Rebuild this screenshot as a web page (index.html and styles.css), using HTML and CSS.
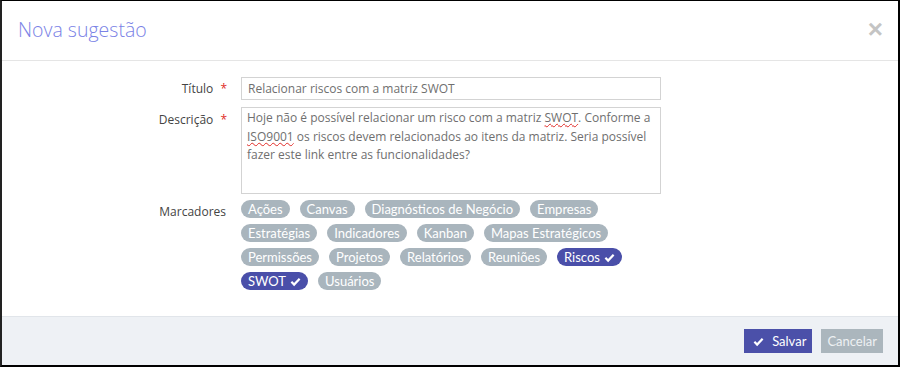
FILE: index.html
```html
<!DOCTYPE html>
<html lang="pt-BR">
<head>
    <meta charset="UTF-8">
    <title>Nova sugestão</title>
    <link rel="stylesheet" href="styles.css">
</head>
<body>
    <div class="modal">
        <div class="modal-header">
            <h2 class="modal-title">Nova sugestão</h2>
            <span class="close">&times;</span>
        </div>

        <div class="modal-body">
            <div class="form-row">
                <label class="form-label">Título <span class="req">*</span></label>
                <div class="form-input">Relacionar riscos com a matriz SWOT</div>
            </div>

            <div class="form-row">
                <label class="form-label label-top">Descrição <span class="req">*</span></label>
                <div class="form-textarea">Hoje não é possível relacionar um risco com a matriz <span class="typo">SWOT</span>. Conforme a <span class="typo">ISO9001</span> os riscos devem relacionados ao itens da matriz. Seria possível fazer este link entre as funcionalidades?</div>
            </div>

            <div class="form-row">
                <label class="form-label label-tags">Marcadores</label>
                <div class="tags">
                    <span class="tag">Ações</span>
                    <span class="tag">Canvas</span>
                    <span class="tag">Diagnósticos de Negócio</span>
                    <span class="tag">Empresas</span>
                    <span class="tag">Estratégias</span>
                    <span class="tag">Indicadores</span>
                    <span class="tag">Kanban</span>
                    <span class="tag">Mapas Estratégicos</span>
                    <span class="tag">Permissões</span>
                    <span class="tag">Projetos</span>
                    <span class="tag">Relatórios</span>
                    <span class="tag">Reuniões</span>
                    <span class="tag selected">Riscos
                        <svg class="check" viewBox="0 0 16 16"><path d="M2 8.5 L6 12.5 L14 4"/></svg>
                    </span>
                    <span class="tag selected">SWOT
                        <svg class="check" viewBox="0 0 16 16"><path d="M2 8.5 L6 12.5 L14 4"/></svg>
                    </span>
                    <span class="tag">Usuários</span>
                </div>
            </div>
        </div>

        <div class="modal-footer">
            <button class="btn btn-primary">
                <svg class="check" viewBox="0 0 16 16"><path d="M2 8.5 L6 12.5 L14 4"/></svg>
                Salvar
            </button>
            <button class="btn btn-default">Cancelar</button>
        </div>
    </div>
</body>
</html>
```

FILE: styles.css
```css
body {
    margin: 0;
    font-family: 'Open Sans', sans-serif;
    color: #333;
    background-color: #fff;
}

.modal {
    width: 900px;
    height: 367px;
    box-sizing: border-box;
    border-top: 1px solid #000;
    border-left: 2px solid #222;
    border-right: 2px solid #000;
    border-bottom: 2px solid #000;
    display: flex;
    flex-direction: column;
    background-color: #fff;
}

.modal-header {
    height: 60px;
    box-sizing: border-box;
    padding: 0 15px 3px 16px;
    border-bottom: 1px solid #e5e5e5;
    display: flex;
    align-items: center;
    justify-content: space-between;
}

.modal-title {
    margin: 0;
    font-weight: 300;
    font-size: 19.5px;
    color: #7a82e6;
    font-family: 'Open Sans', sans-serif;
}

.close {
    font-size: 26px;
    font-weight: bold;
    color: #c4c4c4;
    font-family: 'Liberation Sans', sans-serif;
    line-height: 1;
}

.modal-body {
    flex: 1;
    padding-top: 16px;
}

.form-row {
    display: grid;
    grid-template-columns: 227px 420px;
    column-gap: 12px;
    margin-bottom: 7px;
}

.form-label {
    text-align: right;
    font-size: 12px;
    color: #444;
    line-height: 23px;
    padding-right: 2px;
}

.label-top {
    line-height: 26px;
}

.label-tags {
    padding-right: 3px;
    line-height: 22px;
}

.req {
    color: #e02b27;
    margin-left: 4px;
}

.form-input {
    height: 23px;
    box-sizing: border-box;
    border: 1px solid #d3d3d3;
    padding: 0 6px;
    font-size: 12px;
    line-height: 21px;
    color: #6f6f6f;
}

.form-textarea {
    height: 87px;
    box-sizing: border-box;
    border: 1px solid #d3d3d3;
    padding: 1px 5px;
    font-size: 12px;
    line-height: 18.5px;
    color: #6f6f6f;
}

.typo {
    text-decoration: underline wavy #e02b27;
    text-decoration-thickness: 1px;
    text-underline-offset: 1px;
}

.tags {
    display: flex;
    flex-wrap: wrap;
    gap: 6px 10px;
    margin-top: -1px;
}

.tag {
    display: inline-flex;
    align-items: center;
    gap: 4px;
    height: 18px;
    padding: 0 7px;
    border-radius: 9px;
    background-color: #a9b5bd;
    color: #fff;
    font-family: 'Lato', sans-serif;
    font-size: 13px;
}

.tag.selected {
    background-color: #4a4fa9;
}

.check {
    width: 11px;
    height: 11px;
    fill: none;
    stroke: #fff;
    stroke-width: 3.2;
}

.modal-footer {
    height: 48px;
    border-top: 1px solid #e1e5ea;
    background-color: #eef1f5;
    display: flex;
    align-items: center;
    justify-content: flex-end;
    gap: 9px;
    padding-right: 15px;
}

.btn {
    height: 24px;
    border: none;
    font-family: 'Lato', sans-serif;
    font-size: 13px;
    display: inline-flex;
    align-items: center;
    cursor: pointer;
}

.btn-primary {
    background-color: #4b50a9;
    color: #fff;
    padding: 0 6px 0 9px;
    gap: 8px;
}

.btn-default {
    background-color: #abb6bd;
    color: #eef1f3;
    padding: 0 6px;
}
```
